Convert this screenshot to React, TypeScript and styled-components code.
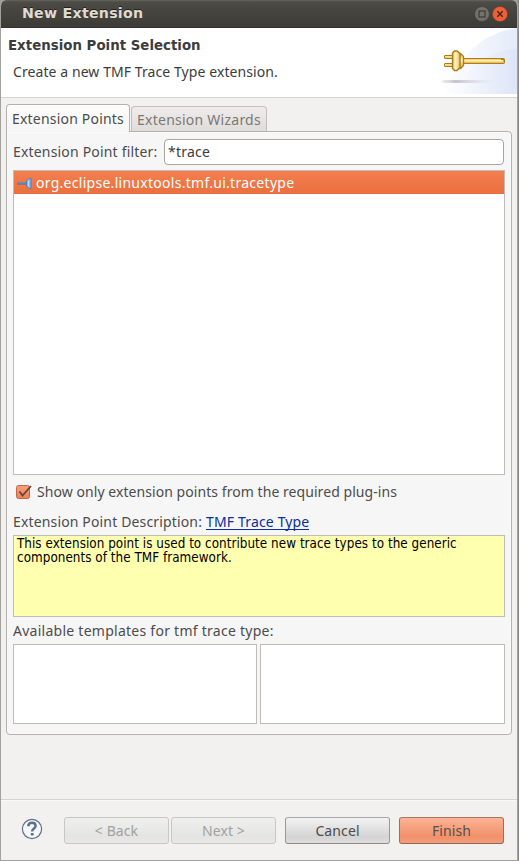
import React from "react";
import styled, { createGlobalStyle, css } from "styled-components";

const GlobalStyle = createGlobalStyle`
  * { box-sizing: border-box; }
  html, body { margin: 0; padding: 0; height: 100%; overflow: hidden; }
  body { background: #8a8983; font-family: "Noto Sans", "Open Sans", sans-serif; font-size: 14px; color: #4c4c4c; }
  button, input { font: inherit; margin: 0; }
`;

const Desktop = styled.div`
  width: 519px;
  height: 861px;
  padding-right: 1px;
  background: linear-gradient(90deg, #a09f99 517px, #8b8a86 518px);
`;

const Window = styled.main`
  width: 518px;
  height: 861px;
  display: flex;
  flex-direction: column;
  background: #f2f1f0;
  border: solid #a3a19b;
  border-width: 0 1px 1px;
  border-radius: 6px 6px 0 0;
  overflow: hidden;
`;

const TitleBar = styled.header`
  height: 28px;
  margin: 0 -1px;
  padding: 0 10px 0 22px;
  flex: none;
  display: flex;
  align-items: center;
  justify-content: space-between;
  background: linear-gradient(#6a6961 0, #55544d 1px, #4b4a44 3px, #3c3b37 100%);
  border-bottom: 1px solid #34332f;
`;

const Title = styled.h1`
  margin: 0 0 1px;
  font: bold 14.2px/18px "DejaVu Sans", sans-serif;
  letter-spacing: 0.25px;
  color: #dfdbd2;
  text-shadow: 0 -1px #22211f;
`;

const WindowControls = styled.div`
  display: flex;
  gap: 2px;
  padding-top: 1px;
`;

const Banner = styled.section`
  height: 70px;
  flex: none;
  display: flex;
  justify-content: space-between;
  background: #fff;
  border-bottom: 1px solid #d6d4d2;
`;

const BannerText = styled.div`
  padding: 9px 0 0 7px;
`;

const BannerTitle = styled.h2`
  margin: 0;
  font: bold 13.33px/18px "DejaVu Sans", sans-serif;
  letter-spacing: 0.02px;
  color: #3c3c3c;
`;

const Label = styled.span<{ $spacing?: number; $color?: string }>`
  line-height: 20px;
  white-space: nowrap;
  letter-spacing: ${(p) => p.$spacing ?? 0}px;
  color: ${(p) => p.$color ?? "#4c4c4c"};
`;

const BannerMessage = styled.p`
  margin: 7px 0 0 5px;
  line-height: 20px;
`;

const Body = styled.section`
  flex: none;
  height: 702px;
  padding: 6px 5px 0;
  border-bottom: 1px solid #d6d4d2;
`;

const TabStrip = styled.div`
  display: flex;
  align-items: flex-end;
  gap: 1px;
  height: 28px;
`;

const Tab = styled.div<{ $active?: boolean }>`
  display: flex;
  justify-content: center;
  border: 1px solid #b5b2ae;
  border-bottom: 0;
  border-radius: 4px 4px 0 0;
  ${(p) =>
    p.$active
      ? css`
          width: 124px;
          height: 28px;
          padding-top: 4px;
          background: linear-gradient(#fcfcfc, #f6f6f6);
          position: relative;
          z-index: 1;
        `
      : css`
          width: 136px;
          height: 25px;
          margin-bottom: 1px;
          padding-top: 3px;
          border-color: #c2bfbb;
          background: linear-gradient(#efedec, #dfdcda);
        `}
`;

const TabPanel = styled.div`
  width: 506px;
  height: 604px;
  margin-top: -1px;
  padding: 7px 6px 0;
  display: flex;
  flex-direction: column;
  background: #f6f6f6;
  border: 1px solid #b5b2ae;
  border-radius: 0 4px 4px 4px;
  box-shadow: inset 0 0 0 1px #fafafa;
`;

const FilterRow = styled.label`
  display: flex;
  align-items: center;
  justify-content: space-between;
  height: 25px;
`;

const FilterInput = styled.input`
  width: 340px;
  height: 26px;
  margin-right: 1px;
  padding: 0 3px;
  border: 1px solid #aaa69f;
  border-radius: 4px;
  outline: none;
  color: #3c3c3c;
  background: #fff;
  letter-spacing: 0.25px;
`;

const ListBox = styled.div`
  height: 305px;
  margin-top: 6px;
  flex: none;
  background: #fff;
  border: 1px solid #bfbcb8;
`;

const ListItem = styled.div`
  height: 23px;
  padding-left: 3px;
  display: flex;
  align-items: center;
  gap: 3px;
  background: linear-gradient(#f47f4e, #ea6f3f);
`;

const CheckRow = styled.div`
  display: flex;
  align-items: center;
  gap: 5px;
  height: 20px;
  margin: 7px 0 0 2px;
`;

const DescriptionRow = styled.div`
  display: flex;
  gap: 4px;
  height: 20px;
  margin-top: 10px;
`;

const Link = styled.a`
  height: 18px;
  line-height: 20px;
  letter-spacing: 0.15px;
  color: #0b2f9c;
  border-bottom: 1px solid #0b2f9c;
  white-space: nowrap;
`;

const Description = styled.div`
  height: 82px;
  margin-top: 3px;
  flex: none;
  padding: 1px 3px;
  background: #ffffb0;
  border: 1px solid #bfbcb8;
  color: #000;
  font: 13.33px/14px "DejaVu Sans Condensed", "DejaVu Sans", sans-serif;
  letter-spacing: 0.04px;
  white-space: pre;
`;

const TemplateCaption = styled.div`
  display: flex;
  height: 20px;
  margin-top: 4px;
`;

const TemplateGrid = styled.div`
  display: grid;
  grid-template-columns: 244px 245px;
  gap: 3px;
  height: 80px;
  margin-top: 3px;
`;

const TemplateBox = styled.div`
  background: #fff;
  border: 1px solid #bfbcb8;
`;

const Footer = styled.footer`
  display: flex;
  align-items: flex-start;
  padding: 17px 0 0 20px;
  box-shadow: inset 0 1px #fafafa;
  flex: 1;
`;

const ButtonRow = styled.div`
  display: flex;
  gap: 9px;
  margin-left: 21px;
`;

const ButtonPair = styled.div`
  display: flex;
  gap: 2px;
`;

const Button = styled.button<{ $kind: "disabled" | "normal" | "primary" }>`
  width: 105px;
  height: 27px;
  padding: 0;
  border: 1px solid;
  border-radius: 3px;
  line-height: 20px;
  letter-spacing: 0.1px;
  ${(p) => p.$kind === "disabled" && css`
    color: #a1a1a0;
    border-color: #c9c7c6;
    background: linear-gradient(#efefee, #e4e4e3 75%, #e8e8e7);
  `}
  ${(p) => p.$kind === "normal" && css`
    color: #4c4c4c;
    border-color: #aaa8a6 #999 #8d8b89;
    background: linear-gradient(#f2f2f2, #d4d4d4 75%, #dedede);
  `}
  ${(p) => p.$kind === "primary" && css`
    color: #54504c;
    border-color: #a67763 #99705e #8d6757;
    background: linear-gradient(#fdb395, #f0916a 75%, #f69d79);
  `}
`;

const MaximizeIcon = () => (
  <svg width="16" height="16" viewBox="0 0 16 16">
    <circle cx="8" cy="8" r="7.4" fill="#73726b" stroke="#44433e" strokeWidth=".8" />
    <rect x="5" y="5" width="6" height="6" fill="none" stroke="#3c3b37" strokeWidth="1.2" />
  </svg>
);

const CloseIcon = () => (
  <svg width="16" height="16" viewBox="0 0 16 16">
    <circle cx="8" cy="8" r="7.6" fill="#ed5f34" stroke="#6a4032" strokeWidth=".6" />
    <path d="m5.300 5.300 5.400 5.400m0-5.400-5.400 5.400" stroke="#492218" strokeWidth="1.400" />
  </svg>
);

const PlugArt = () => (
  <svg width="76" height="66" viewBox="0 0 76 66">
    <defs>
      <linearGradient id="sky" x1="0" x2="1">
        <stop offset="0" stopColor="#fff" />
        <stop offset="1" stopColor="#d8e1f6" />
      </linearGradient>
      <linearGradient id="brass" x1="0" x2="0" y1="0" y2="1">
        <stop offset="0" stopColor="#e3bb4a" />
        <stop offset=".45" stopColor="#fff0b8" />
        <stop offset="1" stopColor="#dba52c" />
      </linearGradient>
      <linearGradient id="head" x1="0" x2="1">
        <stop offset="0" stopColor="#e5bd55" />
        <stop offset=".4" stopColor="#fff6cf" />
        <stop offset="1" stopColor="#e8bd4c" />
      </linearGradient>
      <linearGradient id="shade" x1="0" x2="1">
        <stop offset="0" stopColor="#ddd8e3" stopOpacity=".5" />
        <stop offset=".25" stopColor="#c9c1cf" />
        <stop offset="1" stopColor="#d8dcec" stopOpacity="0" />
      </linearGradient>
    </defs>
    <path d="M0 66C18 30 39 5 76 0V66Z" fill="url(#sky)" opacity=".7" />
    <path d="M4 66C28 45 38 24 76 21V66Z" fill="url(#sky)" opacity=".6" />
    <rect x="1" y="52" width="54" height="3" rx="1.5" fill="url(#shade)" />
    <g stroke="#ad7b18" fill="url(#brass)">
      <rect x="3.500" y="27.500" width="9" height="3" rx=".5" />
      <rect x="3.500" y="35.500" width="9" height="3" rx=".5" />
      <rect x="21.500" y="30.500" width="42" height="5" rx="1" />
      <path d="M16.500 25.500H19.500L22.500 28.500V37.500L19.500 40.500H16.500Z" strokeWidth="1.300" />
      <path d="M13.500 23H16L19 25.500V39.500L16 42.500H13.500L11.500 40.500V25Z" fill="url(#head)" strokeWidth="1.400" />
    </g>
    <path d="M24 32.500H60" stroke="#fff0af" />
    <path d="M60 31.500h3v3" stroke="#a9771b" fill="none" />
  </svg>
);

const ExtensionIcon = () => (
  <svg width="16" height="16" viewBox="0 0 16 16">
    <path d="M0 8.500H10" stroke="#3c6fb0" strokeWidth="2" />
    <path d="M0 8H9" stroke="#769cc9" />
    <path d="M9.500 6 12 3.500H14V13.500H12L9.500 11Z" fill="#8fb4e5" stroke="#4f7fbc" />
    <path d="M11.500 5.500V11.500" stroke="#c3d8f2" />
  </svg>
);

const CheckIcon = () => (
  <svg width="17" height="17" viewBox="0 0 17 17">
    <defs>
      <linearGradient id="checkFill" x1="0" x2="0" y1="0" y2="1">
        <stop offset="0" stopColor="#fba07b" />
        <stop offset="1" stopColor="#ee7f55" />
      </linearGradient>
    </defs>
    <rect x="1.500" y="1.500" width="13" height="13" rx="2" fill="url(#checkFill)" stroke="#c2684a" />
    <path d="m4.500 7.500 3 4 8.500-9.500" fill="none" stroke="#60483f" strokeWidth="1.800" />
  </svg>
);

const HelpIcon = () => (
  <svg width="22" height="24" viewBox="0 0 22 24">
    <circle cx="11" cy="12" r="9.600" fill="#f6f8fa" stroke="#5e7090" strokeWidth="1.200" />
    <path d="M7.300 9.300C7.300 6.800 8.700 5.800 11 5.800C13.300 5.800 14.600 7 14.600 8.900C14.600 11.500 11.100 11.400 11.100 14.500" fill="none" stroke="#5e7090" strokeWidth="2.500" />
    <rect x="9.700" y="16" width="3" height="2.500" rx=".8" fill="#5e7090" />
  </svg>
);

export default function App() {
  return (
    <Desktop>
      <GlobalStyle />
      <Window>
        <TitleBar>
          <Title>New Extension</Title>
          <WindowControls>
            <MaximizeIcon />
            <CloseIcon />
          </WindowControls>
        </TitleBar>
        <Banner>
          <BannerText>
            <BannerTitle>Extension Point Selection</BannerTitle>
            <BannerMessage>
              <Label $spacing={0.08} $color="#3c3c3c">Create a new TMF Trace Type extension.</Label>
            </BannerMessage>
          </BannerText>
          <PlugArt />
        </Banner>
        <Body>
          <TabStrip>
            <Tab $active><Label $spacing={0.2}>Extension Points</Label></Tab>
            <Tab><Label $spacing={0.24} $color="#7b7876">Extension Wizards</Label></Tab>
          </TabStrip>
          <TabPanel>
            <FilterRow>
              <Label $spacing={0.18}>Extension Point filter:</Label>
              <FilterInput defaultValue="*trace" />
            </FilterRow>
            <ListBox>
              <ListItem>
                <ExtensionIcon />
                <Label $spacing={0.28} $color="#fff">org.eclipse.linuxtools.tmf.ui.tracetype</Label>
              </ListItem>
            </ListBox>
            <CheckRow>
              <CheckIcon />
              <Label $spacing={0.06}>Show only extension points from the required plug-ins</Label>
            </CheckRow>
            <DescriptionRow>
              <Label $spacing={0.15}>Extension Point Description:</Label>
              <Link>TMF Trace Type</Link>
            </DescriptionRow>
            <Description>{"This extension point is used to contribute new trace types to the generic\ncomponents of the TMF framework."}</Description>
            <TemplateCaption>
              <Label $spacing={0.26}>Available templates for tmf trace type:</Label>
            </TemplateCaption>
            <TemplateGrid>
              <TemplateBox />
              <TemplateBox />
            </TemplateGrid>
          </TabPanel>
        </Body>
        <Footer>
          <HelpIcon />
          <ButtonRow>
            <ButtonPair>
              <Button $kind="disabled" disabled>&lt; Back</Button>
              <Button $kind="disabled" disabled>Next &gt;</Button>
            </ButtonPair>
            <Button $kind="normal">Cancel</Button>
            <Button $kind="primary">Finish</Button>
          </ButtonRow>
        </Footer>
      </Window>
    </Desktop>
  );
}
